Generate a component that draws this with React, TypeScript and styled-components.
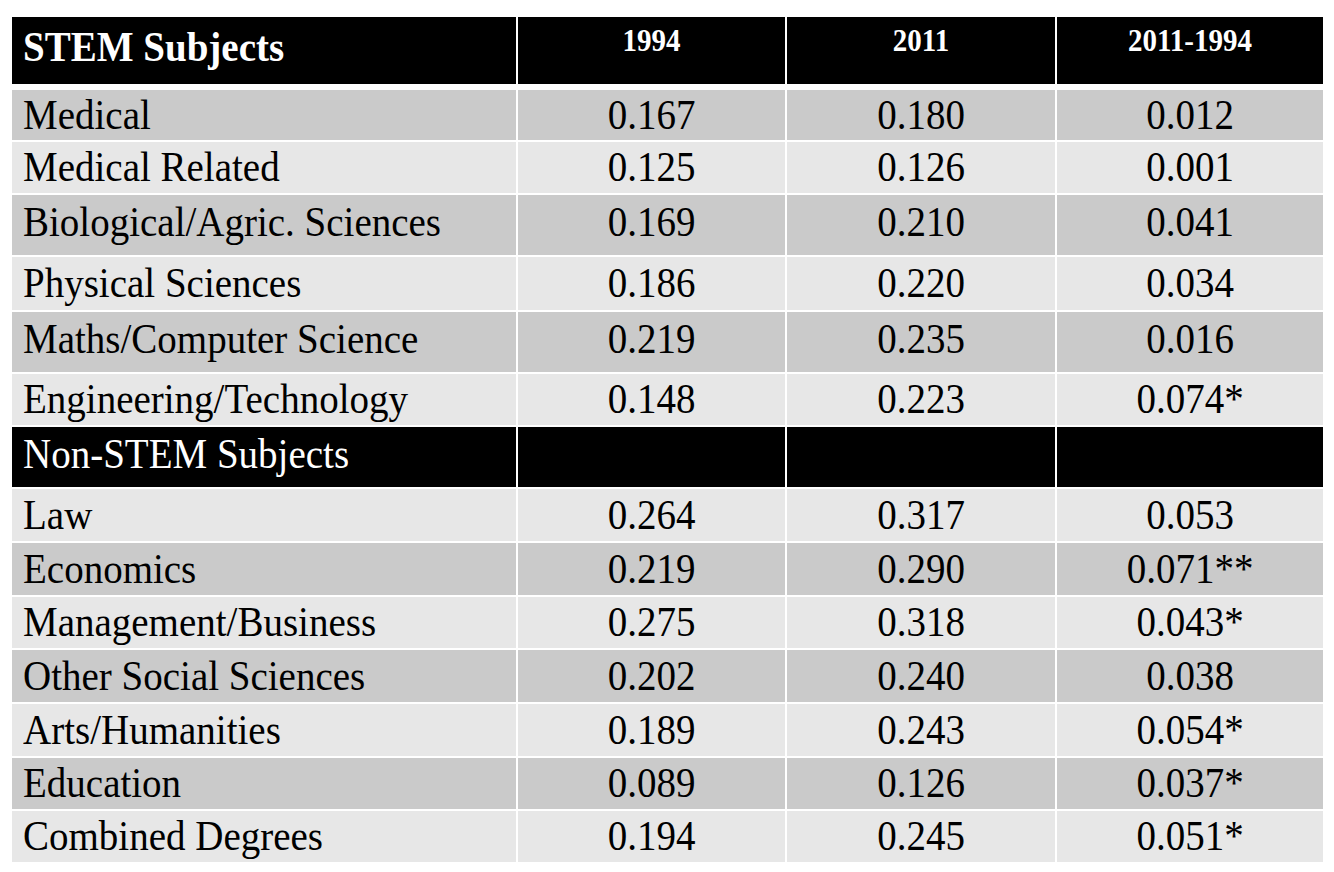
import React from 'react';
import styled, { createGlobalStyle } from 'styled-components';

const GlobalStyle = createGlobalStyle`
  html, body {
    margin: 0;
    padding: 0;
    background: #fff;
  }
  body {
    font-family: "Liberation Serif", "Times New Roman", serif;
  }
`;

type Tone = 'head' | 'dark' | 'light';

const toneColor: Record<Tone, string> = {
  head: '#000',
  dark: '#cacaca',
  light: '#e7e7e7',
};

const Page = styled.div`
  padding: 17px 0 0 12px;
`;

const Table = styled.div`
  width: 1311px;
  display: flex;
  flex-direction: column;
  gap: 2px;
  background: #fff;
`;

const Row = styled.div<{ $h: number; $after?: number }>`
  display: grid;
  grid-template-columns: 504px 267px 268px 266px;
  column-gap: 2px;
  height: ${(p) => p.$h}px;
  margin-bottom: ${(p) => p.$after || 0}px;
`;

const Cell = styled.div<{ $tone: Tone; $first?: boolean; $lift?: number }>`
  background: ${(p) => toneColor[p.$tone]};
  color: ${(p) => (p.$tone === 'head' ? '#fff' : '#000')};
  display: flex;
  align-items: center;
  justify-content: ${(p) => (p.$first ? 'flex-start' : 'center')};
  padding: 0 0 ${(p) => p.$lift || 0}px ${(p) => (p.$first ? 11 : 0)}px;
  font-size: 39px;
  white-space: nowrap;
  overflow: hidden;
`;

const Text = styled.span`
  display: inline-block;
  transform: scaleY(1.1);
  line-height: 1;
`;

const HeadCell = styled(Cell)`
  font-weight: bold;
`;

const YearCell = styled(HeadCell)`
  font-size: 29px;
  align-items: flex-start;
  padding-top: 9px;
`;

type DataRow = {
  name: string;
  a?: string;
  b?: string;
  d?: string;
  tone: Tone;
  h: number;
};

const rows: DataRow[] = [
  { name: 'Medical', a: '0.167', b: '0.180', d: '0.012', tone: 'dark', h: 50 },
  { name: 'Medical Related', a: '0.125', b: '0.126', d: '0.001', tone: 'light', h: 51 },
  { name: 'Biological/Agric. Sciences', a: '0.169', b: '0.210', d: '0.041', tone: 'dark', h: 60 },
  { name: 'Physical Sciences', a: '0.186', b: '0.220', d: '0.034', tone: 'light', h: 53 },
  { name: 'Maths/Computer Science', a: '0.219', b: '0.235', d: '0.016', tone: 'dark', h: 60 },
  { name: 'Engineering/Technology', a: '0.148', b: '0.223', d: '0.074*', tone: 'light', h: 51 },
  { name: 'Non-STEM Subjects', tone: 'head', h: 60 },
  { name: 'Law', a: '0.264', b: '0.317', d: '0.053', tone: 'light', h: 52 },
  { name: 'Economics', a: '0.219', b: '0.290', d: '0.071**', tone: 'dark', h: 52 },
  { name: 'Management/Business', a: '0.275', b: '0.318', d: '0.043*', tone: 'light', h: 51 },
  { name: 'Other Social Sciences', a: '0.202', b: '0.240', d: '0.038', tone: 'dark', h: 52 },
  { name: 'Arts/Humanities', a: '0.189', b: '0.243', d: '0.054*', tone: 'light', h: 52 },
  { name: 'Education', a: '0.089', b: '0.126', d: '0.037*', tone: 'dark', h: 51 },
  { name: 'Combined Degrees', a: '0.194', b: '0.245', d: '0.051*', tone: 'light', h: 51 },
];

const App = () => {
  return (
    <Page>
      <GlobalStyle />
      <Table>
        <Row $h={67} $after={4}>
          <HeadCell $tone="head" $first $lift={8}>
            <Text>STEM Subjects</Text>
          </HeadCell>
          <YearCell $tone="head">
            <Text>1994</Text>
          </YearCell>
          <YearCell $tone="head">
            <Text>2011</Text>
          </YearCell>
          <YearCell $tone="head">
            <Text>2011-1994</Text>
          </YearCell>
        </Row>
        {rows.map((r) => {
          const lift = r.h >= 58 ? 8 : 2;
          return (
            <Row key={r.name} $h={r.h}>
              <Cell $tone={r.tone} $first $lift={lift}>
                <Text>{r.name}</Text>
              </Cell>
              <Cell $tone={r.tone} $lift={lift}>
                <Text>{r.a}</Text>
              </Cell>
              <Cell $tone={r.tone} $lift={lift}>
                <Text>{r.b}</Text>
              </Cell>
              <Cell $tone={r.tone} $lift={lift}>
                <Text>{r.d}</Text>
              </Cell>
            </Row>
          );
        })}
      </Table>
    </Page>
  );
};

export default App;
